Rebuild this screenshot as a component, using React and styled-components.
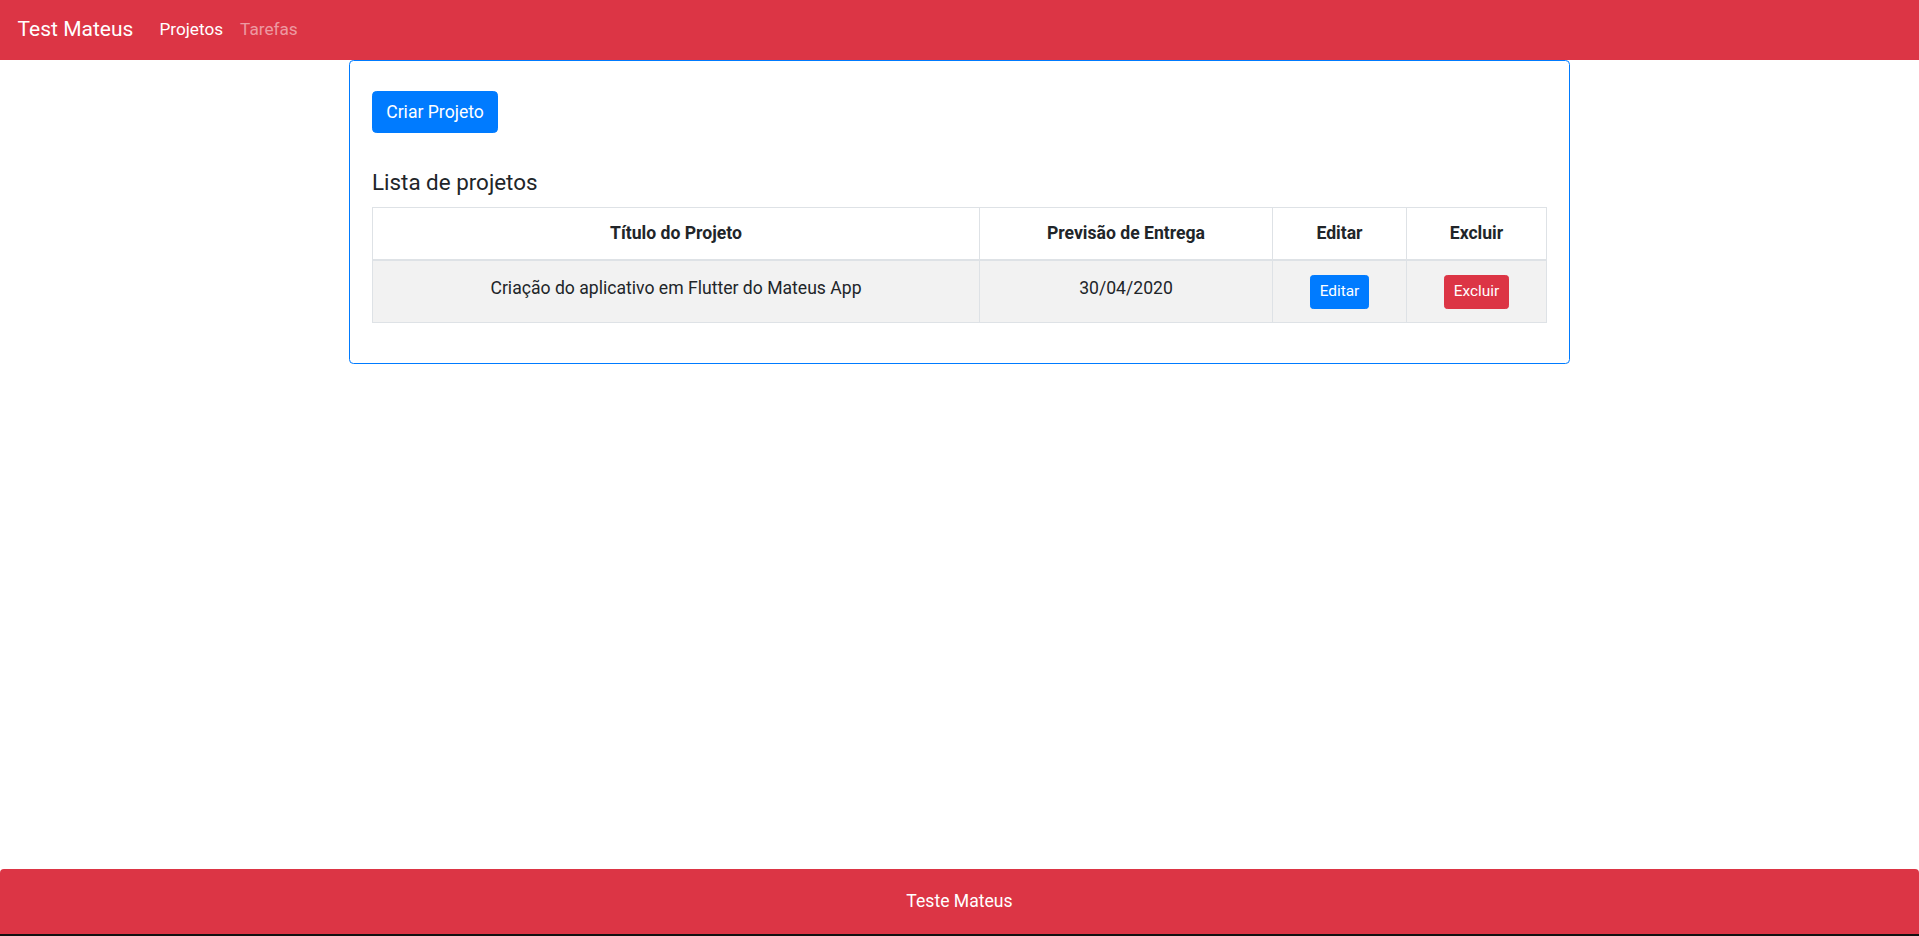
import styled, { createGlobalStyle } from "styled-components";

const GlobalStyle = createGlobalStyle`
  html, body {
    margin: 0;
    padding: 0;
  }
  body {
    font-family: "Segoe UI", Roboto, "Liberation Sans", sans-serif;
    font-size: 17.6px;
    line-height: 1.5;
    color: #212529;
    background: #fff;
  }
  * {
    box-sizing: border-box;
  }
`

const Page = styled.div`
  min-height: 100vh;
  display: flex;
  flex-direction: column;
`
const Navbar = styled.nav`
  height: 60px;
  display: flex;
  align-items: center;
  padding: 0 17.6px;
  background: #dc3545;
`
const Brand = styled.a`
  font-size: 21px;
  color: #fff;
  margin-right: 17.6px;
  text-decoration: none;
`
const NavLink = styled.a`
  padding: 0 8.5px;
  font-size: 17.2px;
  color: ${(p) => (p.$active ? "#fff" : "rgba(255,255,255,.5)")};
  text-decoration: none;
`
const Main = styled.main`
  flex: 1;
`
const Card = styled.section`
  width: 1221px;
  margin: 0 auto;
  padding: 22px;
  border: 1px solid #007bff;
  border-radius: 4.4px;
`
const Button = styled.button`
  display: inline-block;
  font-family: inherit;
  font-size: ${(p) => (p.$small ? "15.4px" : "17.6px")};
  line-height: 1.5;
  padding: ${(p) => (p.$small ? "4.4px 8.8px" : "6.6px 13.2px")};
  border: 1px solid ${(p) => (p.$danger ? "#dc3545" : "#007bff")};
  border-radius: ${(p) => (p.$small ? "3.3px" : "4.4px")};
  background: ${(p) => (p.$danger ? "#dc3545" : "#007bff")};
  color: #fff;
  cursor: pointer;
`
const CreateButton = styled(Button)`
  margin-top: 8px;
`
const Heading = styled.h4`
  font-size: 22.4px;
  font-weight: 400;
  line-height: 1.2;
  margin: 36px 0 12px;
`
const Table = styled.table`
  width: 100%;
  border-collapse: collapse;
  margin-bottom: 17.6px;
  text-align: center;
`
const Th = styled.th`
  width: ${(p) => p.$w}px;
  padding: 12px 13.2px;
  border: 1px solid #dee2e6;
  border-bottom-width: 2px;
  font-weight: 700;
  vertical-align: bottom;
`
const Row = styled.tr`
  background: #f2f2f2;
`
const Td = styled.td`
  padding: 13.8px 13.2px;
  border: 1px solid #dee2e6;
  vertical-align: top;
`
const Footer = styled.footer`
  height: 65px;
  display: flex;
  align-items: center;
  justify-content: center;
  background: #dc3545;
  color: #fff;
  border-radius: 4px 4px 0 0;
`
const BottomEdge = styled.div`
  height: 2px;
  background: #111;
`

const projects = [
  { title: "Criação do aplicativo em Flutter do Mateus App", date: "30/04/2020" },
]

const App = () => {
  return (
    <Page>
      <GlobalStyle />
      <Navbar>
        <Brand href="#">Test Mateus</Brand>
        <NavLink href="#" $active>Projetos</NavLink>
        <NavLink href="#">Tarefas</NavLink>
      </Navbar>
      <Main>
        <Card>
          <CreateButton>Criar Projeto</CreateButton>
          <Heading>Lista de projetos</Heading>
          <Table>
            <thead>
              <tr>
                <Th $w={607}>Título do Projeto</Th>
                <Th $w={293}>Previsão de Entrega</Th>
                <Th $w={134}>Editar</Th>
                <Th $w={140}>Excluir</Th>
              </tr>
            </thead>
            <tbody>
              {projects.map((p) => (
                <Row key={p.title}>
                  <Td>{p.title}</Td>
                  <Td>{p.date}</Td>
                  <Td><Button $small>Editar</Button></Td>
                  <Td><Button $small $danger>Excluir</Button></Td>
                </Row>
              ))}
            </tbody>
          </Table>
        </Card>
      </Main>
      <Footer>Teste Mateus</Footer>
      <BottomEdge />
    </Page>
  )
}

export default App;
